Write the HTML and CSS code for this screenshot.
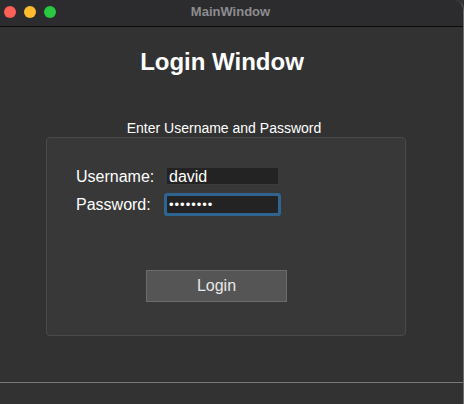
FILE: index.html
```html
<!DOCTYPE html>
<html>
<head>
<meta charset="utf-8">
<link rel="stylesheet" href="styles.css">
</head>
<body>
<div class="window">
  <div class="titlebar">
    <div class="lights">
      <span class="light red"></span>
      <span class="light yellow"></span>
      <span class="light green"></span>
    </div>
    <div class="wintitle">MainWindow</div>
  </div>
  <div class="content">
    <div class="panel">
      <h1 class="heading">Login Window</h1>
      <p class="subtitle">Enter Username and Password</p>
      <div class="group">
        <div class="row">
          <label class="label">Username:</label>
          <div class="field">david</div>
        </div>
        <div class="row">
          <label class="label">Password:</label>
          <div class="field focused">&#8226;&#8226;&#8226;&#8226;&#8226;&#8226;&#8226;&#8226;</div>
        </div>
        <div class="btnrow">
          <button class="btn">Login</button>
        </div>
      </div>
    </div>
  </div>
  <div class="statusbar"></div>
</div>
</body>
</html>
```

FILE: styles.css
```css
* { box-sizing: border-box; }
html, body { margin: 0; padding: 0; background: #323232; }
body { font-family: "Liberation Sans", Arial, sans-serif; color: #ffffff; }
.window {
  width: 464px; height: 404px; background: #323232;
  display: flex; flex-direction: column;
  border-right: 1px solid #6e6e6e;
  border-top-right-radius: 10px;
  overflow: hidden;
}
.titlebar {
  height: 27px; flex: none; background: #2c2c2e;
  border-bottom: 1px solid #0c0c0c;
  position: relative;
  display: flex; align-items: center; justify-content: center;
}
.lights { position: absolute; left: 4px; top: 6px; display: flex; gap: 8px; }
.light { width: 12px; height: 12px; border-radius: 50%; display: block; }
.red { background: #fe5f57; }
.yellow { background: #febc2e; }
.green { background: #28c840; }
.wintitle { font-size: 13px; font-weight: bold; color: #8d8d8f; margin-top: -4px; margin-right: 2px; }
.content { flex: 1; display: flex; flex-direction: column; }
.panel { margin-left: 46px; width: 360px; display: flex; flex-direction: column; align-items: center; }
.heading { margin: 21px 8px 0 0; font-size: 24px; line-height: 28px; font-weight: bold; color: #ffffff; }
.subtitle { margin: 44px 4px 0 0; font-size: 14px; line-height: 16px; color: #ffffff; }
.group {
  margin-top: 1px; align-self: stretch;
  height: 199px;
  background: #383838; border: 1px solid #4a4a4a; border-radius: 4px;
  padding: 30px 0 0 29px;
  display: flex; flex-direction: column;
}
.row { display: flex; align-items: center; height: 17px; margin-bottom: 11px; }
.label { width: 91px; font-size: 16px; color: #ffffff; }
.field {
  width: 111px; height: 17px; background: #232323;
  font-size: 16px; line-height: 17px; padding-left: 2px; color: #ffffff;
  border-bottom: 1px solid #3c3c3c;
}
.field.focused {
  font-size: 13px; letter-spacing: 1px;
  box-shadow: 0 0 0 3px #2f6390;
  border-bottom: none; border-radius: 1px;
}
.btnrow { margin-top: 46px; padding-left: 70px; }
.btn {
  width: 141px; height: 32px; background: #555555;
  border: 1px solid #6c6c6c; color: #e8e8e8;
  font-family: "Liberation Sans", Arial, sans-serif; font-size: 16px;
}
.statusbar { height: 22px; flex: none; border-top: 1px solid #7a7a7a; background: #323232; }
```
